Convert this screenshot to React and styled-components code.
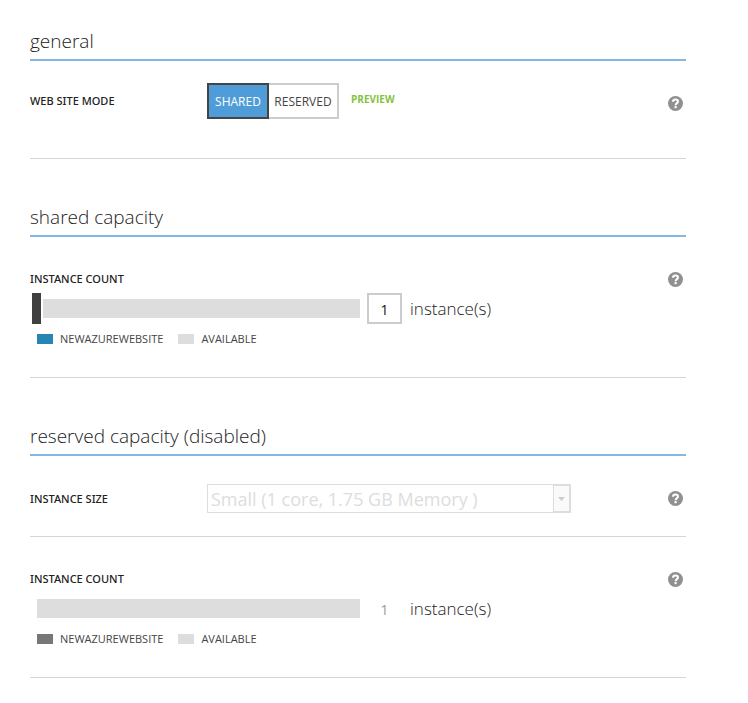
import React, { useState } from "react";
import styled, { createGlobalStyle, css } from "styled-components";

const GlobalStyle = createGlobalStyle`
  *, *::before, *::after { box-sizing: border-box; }
  body {
    margin: 0;
    background: #fff;
    color: #333;
    font-family: "Open Sans", "Noto Sans", sans-serif;
    font-size: 11px;
    line-height: 16px;
  }
  button, input, select { font-family: inherit; margin: 0; border-radius: 0; }
`;

const Page = styled.main`
  display: flex;
  flex-direction: column;
  gap: 43px;
  padding: 26px 62px 24px 30px;
`;

const SectionTitle = styled.h2`
  margin: 0;
  padding: 1px 0 4px;
  border-bottom: 2px solid #84b7e2;
  font-size: 19px;
  line-height: 28px;
  font-weight: 300;
  color: #222;
`;

const Field = styled.div`
  display: flex;
  align-items: flex-start;
  justify-content: space-between;
  padding: ${(p) => p.$padding};
  border-bottom: 1px solid #d4d4d4;
`;

const FieldRow = styled.div`
  display: grid;
  grid-template-columns: 177px auto auto;
  align-items: center;
`;

const FieldStack = styled.div`
  display: flex;
  flex-direction: column;
`;

const labelText = css`
  font-family: "Noto Sans", sans-serif;
  font-size: 11px;
  line-height: 16px;
  font-weight: 500;
  color: #222;
`;

const Label = styled.label`${labelText}`;
const GroupLabel = styled.span`${labelText}`;

const Help = styled.button`
  display: block;
  width: 15px;
  height: 15px;
  margin: ${(p) => p.$top} 3px 0 0;
  padding: 0;
  border: 0;
  background: none;
  svg { display: block; }
`;

const ToggleGroup = styled.div`
  display: flex;
`;

const ToggleButton = styled.button`
  height: 36px;
  width: ${(p) => (p.$first ? "62px" : "70px")};
  padding: 2px 0 0;
  font-size: 12px;
  line-height: 16px;
  border: 2px solid ${(p) => (p.$selected ? "#444" : "#ccc")};
  border-left-width: ${(p) => (p.$first || p.$selected ? "2px" : "0")};
  background: ${(p) => (p.$selected ? "#4f9dd8" : "#fff")};
  color: ${(p) => (p.$selected ? "#fff" : "#444")};
`;

const Preview = styled.span`
  align-self: start;
  margin: 8px 0 0 12px;
  font-size: 10px;
  line-height: 16px;
  font-weight: 700;
  color: #84c341;
`;

const SliderRow = styled.div`
  display: flex;
  align-items: center;
  height: 31px;
  margin: 6px 0 7px;
  padding-left: 2px;
`;

const Slider = styled.input`
  appearance: none;
  width: 328px;
  height: 31px;
  background: linear-gradient(#ddd, #ddd) center / 100% 19px no-repeat;
  &::-webkit-slider-thumb {
    appearance: none;
    width: 9px;
    height: 31px;
    background: #404040;
    box-shadow: 2px 0 0 #fff;
  }
  &:disabled {
    width: 323px;
    margin-left: 5px;
  }
  &:disabled::-webkit-slider-thumb { visibility: hidden; }
`;

const CountInput = styled.input`
  width: 35px;
  height: 31px;
  margin: 0 8px 0 7px;
  padding: 2px 0 0;
  border: 2px solid #ccc;
  background: #fff;
  color: #111;
  font-size: 14px;
  text-align: center;
  &:disabled {
    border-color: transparent;
    color: #999;
  }
`;

const Unit = styled.span`
  font-size: 17px;
  line-height: 24px;
  font-weight: 300;
  color: #222;
`;

const Legend = styled.ul`
  display: flex;
  gap: 15px;
  margin: 0;
  padding: 0 0 0 7px;
  list-style: none;
`;

const LegendItem = styled.li`
  display: flex;
  align-items: center;
  gap: 7px;
  color: #444;
  &::before {
    content: "";
    width: 16px;
    height: 10px;
    background: ${(p) => p.$color};
  }
`;

const SelectBox = styled.div`
  display: grid;
  grid-template-columns: 345px 18px;
  height: 29px;
  border: 1px solid #ddd;
  border-right-width: 0;
`;

const Select = styled.select`
  grid-area: 1 / 1 / 2 / 3;
  appearance: none;
  width: 100%;
  height: 27px;
  padding: 0 20px 0 3px;
  border: 0;
  background: #fff;
  color: #ddd;
  font-size: 18px;
  &:disabled { opacity: 1; }
`;

const SelectArrow = styled.span`
  grid-area: 1 / 2 / 2 / 3;
  z-index: 1;
  display: flex;
  align-items: center;
  justify-content: center;
  border: 1px solid #ddd;
  border-right-width: 2px;
  background: #fafafa;
  pointer-events: none;
`;

function HelpButton({ top, topic }) {
  return (
    <Help type="button" $top={top} aria-label={`Help: ${topic}`}>
      <svg width="15" height="15" viewBox="0 0 15 15">
        <circle cx="7.5" cy="7.5" r="7.5" fill="#909090" />
        <path d="M5 5.8C5 4.2 6 3.5 7.5 3.5S10 4.3 10 5.5C10 7.1 7.6 7.2 7.6 9.2" fill="none" stroke="#fff" strokeWidth="2" />
        <rect x="6.5" y="10.1" width="2.2" height="2.1" fill="#fff" />
      </svg>
    </Help>
  );
}

function InstanceCount({ id, color, disabled }) {
  const [count, setCount] = useState(1);
  const change = (e) => setCount(e.target.value);
  return (
    <Field $padding="34px 0 30px">
      <FieldStack>
        <Label htmlFor={id}>INSTANCE COUNT</Label>
        <SliderRow>
          <Slider type="range" min="1" max="6" value={count} onChange={change} disabled={disabled} aria-label="Instance count slider" />
          <CountInput id={id} type="text" value={count} onChange={change} disabled={disabled} />
          <Unit>instance(s)</Unit>
        </SliderRow>
        <Legend>
          <LegendItem $color={color}>NEWAZUREWEBSITE</LegendItem>
          <LegendItem $color="#ddd">AVAILABLE</LegendItem>
        </Legend>
      </FieldStack>
      <HelpButton top="1px" topic="instance count" />
    </Field>
  );
}

export default function App() {
  const [mode, setMode] = useState("SHARED");
  return (
    <>
      <GlobalStyle />
      <Page>
        <section>
          <SectionTitle>general</SectionTitle>
          <Field $padding="22px 0 39px">
            <FieldRow>
              <GroupLabel id="mode-label">WEB SITE MODE</GroupLabel>
              <ToggleGroup role="group" aria-labelledby="mode-label">
                {["SHARED", "RESERVED"].map((name, i) => (
                  <ToggleButton
                    key={name}
                    type="button"
                    $first={i === 0}
                    $selected={mode === name}
                    aria-pressed={mode === name}
                    onClick={() => setMode(name)}
                  >
                    {name}
                  </ToggleButton>
                ))}
              </ToggleGroup>
              <Preview>PREVIEW</Preview>
            </FieldRow>
            <HelpButton top="13px" topic="web site mode" />
          </Field>
        </section>

        <section>
          <SectionTitle>shared capacity</SectionTitle>
          <InstanceCount id="shared-count" color="#2585b5" />
        </section>

        <section>
          <SectionTitle>reserved capacity (disabled)</SectionTitle>
          <Field $padding="28px 0 23px">
            <FieldRow>
              <Label htmlFor="instance-size">INSTANCE SIZE</Label>
              <SelectBox>
                <Select id="instance-size" disabled>
                  <option>Small (1 core, 1.75 GB Memory )</option>
                </Select>
                <SelectArrow>
                  <svg width="7" height="4" viewBox="0 0 7 4">
                    <path d="M0 0h7L3.5 4z" fill="#ccc" />
                  </svg>
                </SelectArrow>
              </SelectBox>
            </FieldRow>
            <HelpButton top="7px" topic="instance size" />
          </Field>
          <InstanceCount id="reserved-count" color="#777" disabled />
        </section>
      </Page>
    </>
  );
}
